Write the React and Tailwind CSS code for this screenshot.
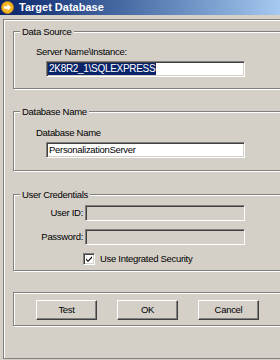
import React from 'react';

function Group({ label, className = '', children }) {
  return (
    <div
      className={`relative ml-[9px] w-[320px] border border-[#808080] shadow-[inset_1px_1px_0_#fff,1px_1px_0_#fff] ${className}`}
    >
      {label && (
        <span className="absolute -top-[6px] left-[6px] bg-[#d4d0c8] px-[2px] leading-[12px]">
          {label}
        </span>
      )}
      {children}
    </div>
  );
}

function TextBox({ className = '', disabled, children }) {
  return (
    <div
      className={`h-[16px] border border-t-[#808080] border-l-[#808080] border-b-white border-r-white shadow-[inset_1px_1px_0_#404040,inset_-1px_-1px_0_#d4d0c8] pl-[1px] flex items-center leading-[12px] ${
        disabled ? 'bg-[#d4d0c8]' : 'bg-white'
      } ${className}`}
    >
      {children}
    </div>
  );
}

function WinButton({ children }) {
  return (
    <button className="w-[61px] h-[20px] bg-[#d4d0c8] border border-t-white border-l-white border-b-[#404040] border-r-[#404040] shadow-[inset_-1px_-1px_0_#808080] leading-[12px] text-black">
      {children}
    </button>
  );
}

export default function App() {
  return (
    <div className="w-[280px] h-[360px] overflow-hidden bg-[#d4d0c8] text-black text-[9.5px] tracking-[-0.3px] [font-family:'Liberation_Sans',Arial,sans-serif]">
      {/* title bar */}
      <div className="h-[15px] flex items-center bg-gradient-to-r from-[#0a246a] to-[#a6caf0]">
        <svg width="13" height="13" viewBox="0 0 13 13" className="ml-[1px]">
          <circle cx="6.5" cy="6.5" r="6" fill="#f5b520" stroke="#c98a10" strokeWidth="0.8" />
          <path d="M3 5.3h3.5V3.2L10 6.5 6.5 9.8V7.7H3z" fill="#fff" />
        </svg>
        <span className="ml-[5px] text-[11px] tracking-normal font-bold text-white leading-[13px]">
          Target Database
        </span>
      </div>

      <div className="ml-[3px] mt-[4px] h-[340px] border-l border-t border-b border-[#808080] shadow-[inset_1px_1px_0_#fff]">
        <Group label="Data Source" className="mt-[11px] pt-[14px] pb-[11px]">
          <div className="pl-[22px] leading-[12px]">Server Name\Instance:</div>
          <TextBox className="mt-[3px] ml-[32px] w-[199px]">
            <span className="bg-[#0a246a] text-white px-[1px] text-[10px]">2K8R2_1\SQLEXPRESS</span>
          </TextBox>
        </Group>

        <Group label="Database Name" className="mt-[22px] pt-[15px] pb-[12px]">
          <div className="pl-[22px] leading-[12px]">Database Name</div>
          <TextBox className="mt-[3px] ml-[32px] w-[199px]">
            <span className="px-[1px]">PersonalizationServer</span>
          </TextBox>
        </Group>

        <Group label="User Credentials" className="mt-[23px] pt-[10px] pb-[5px]">
          <div className="flex items-center">
            <span className="w-[69px] text-right leading-[12px]">User ID:</span>
            <TextBox disabled className="ml-[2px] w-[160px]" />
          </div>
          <div className="mt-[8px] flex items-center">
            <span className="w-[69px] text-right leading-[12px]">Password:</span>
            <TextBox disabled className="ml-[2px] w-[160px]" />
          </div>
          <div className="mt-[8px] ml-[69px] flex items-center">
            <span className="w-[12px] h-[12px] bg-white border border-t-[#808080] border-l-[#808080] border-b-white border-r-white shadow-[inset_1px_1px_0_#404040,inset_-1px_-1px_0_#d4d0c8] flex items-center justify-center">
              <svg width="8" height="8" viewBox="0 0 8 8">
                <path d="M1 3.5l2 2 4-4.2v1.6L3 7 1 5z" fill="#000" />
              </svg>
            </span>
            <span className="ml-[5px] leading-[12px]">Use Integrated Security</span>
          </div>
        </Group>

        <Group className="mt-[21px] pt-[7px] pb-[5px]">
          <div className="pl-[22px] flex gap-[20px]">
            <WinButton>Test</WinButton>
            <WinButton>OK</WinButton>
            <WinButton>Cancel</WinButton>
          </div>
        </Group>
      </div>
    </div>
  );
}
